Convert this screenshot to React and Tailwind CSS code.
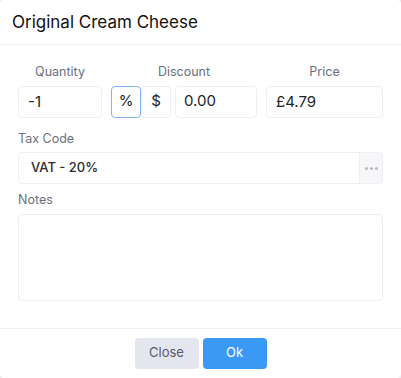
import React, { useState } from 'react';

const font = { fontFamily: 'Inter, "Noto Sans", sans-serif' };

const Label = ({ children, center }) => (
  <div className={`text-[12.5px] text-[#6b6f80] leading-none mb-[7px] ${center ? 'text-center' : ''}`}>{children}</div>
);

export default function App() {
  const [mode, setMode] = useState('%');

  return (
    <div className="w-[401px] h-[378px] bg-[#e9e9ee]" style={font}>
      <div className="w-full h-full bg-white rounded-[4px] flex flex-col text-[#212529]">
        <div className="h-[45px] px-[12px] flex items-center border-b border-[#eeeff3] shrink-0">
          <h3 className="text-[17px] font-normal text-[#111] pt-[1px]">Original Cream Cheese</h3>
        </div>

        <div className="px-[18px] pt-[21px] flex-1">
          <div className="flex gap-[9px]">
            <div className="w-[84px]">
              <Label center>Quantity</Label>
              <input
                defaultValue="-1"
                className="w-full h-[32px] px-[9px] text-[15px] border border-[#eceef4] rounded-[4px] outline-none"
              />
            </div>
            <div className="w-[146px]">
              <Label center>Discount</Label>
              <div className="flex h-[32px]">
                <button
                  onClick={() => setMode('%')}
                  className={`w-[30px] text-[15px] rounded-[4px] border ${mode === '%' ? 'border-[#7fb7f0]' : 'border-[#eceef4]'}`}
                >
                  %
                </button>
                <button
                  onClick={() => setMode('$')}
                  className={`w-[30px] text-[15px] rounded-[4px] border ${mode === '$' ? 'border-[#7fb7f0]' : 'border-[#eceef4]'}`}
                >
                  $
                </button>
                <input
                  defaultValue="0.00"
                  className="ml-[4px] flex-1 min-w-0 px-[8px] text-[15px] border border-[#eceef4] rounded-[4px] outline-none"
                />
              </div>
            </div>
            <div className="flex-1">
              <Label center>Price</Label>
              <input
                defaultValue="£4.79"
                className="w-full h-[32px] px-[9px] text-[15px] border border-[#eceef4] rounded-[4px] outline-none"
              />
            </div>
          </div>

          <div className="mt-[15px]">
            <Label>Tax Code</Label>
            <div className="flex h-[32px] border border-[#eceef4] rounded-[4px] overflow-hidden">
              <div className="flex-1 flex items-center px-[12px] text-[13px] font-medium text-[#2b2b33]">VAT - 20%</div>
              <button className="w-[23px] bg-[#f7f7f9] border-l border-[#eceef4] flex items-center justify-center gap-[2px]">
                <span className="w-[3px] h-[3px] rounded-full bg-[#b8bac4]" />
                <span className="w-[3px] h-[3px] rounded-full bg-[#b8bac4]" />
                <span className="w-[3px] h-[3px] rounded-full bg-[#b8bac4]" />
              </button>
            </div>
          </div>

          <div className="mt-[10px]">
            <Label>Notes</Label>
            <textarea className="w-full h-[87px] block border border-[#eceef4] rounded-[4px] resize-none outline-none p-2 text-[14px]" />
          </div>
        </div>

        <div className="h-[50px] border-t border-[#eeeff3] flex items-center justify-center gap-[4px] shrink-0 pb-[1px]">
          <button className="w-[64px] h-[31px] rounded-[4px] bg-[#e4e6ef] text-[13px] text-[#555a6b]">Close</button>
          <button className="w-[64px] h-[31px] rounded-[4px] bg-[#3a99f5] text-[13px] text-white">Ok</button>
        </div>
      </div>
    </div>
  );
}
